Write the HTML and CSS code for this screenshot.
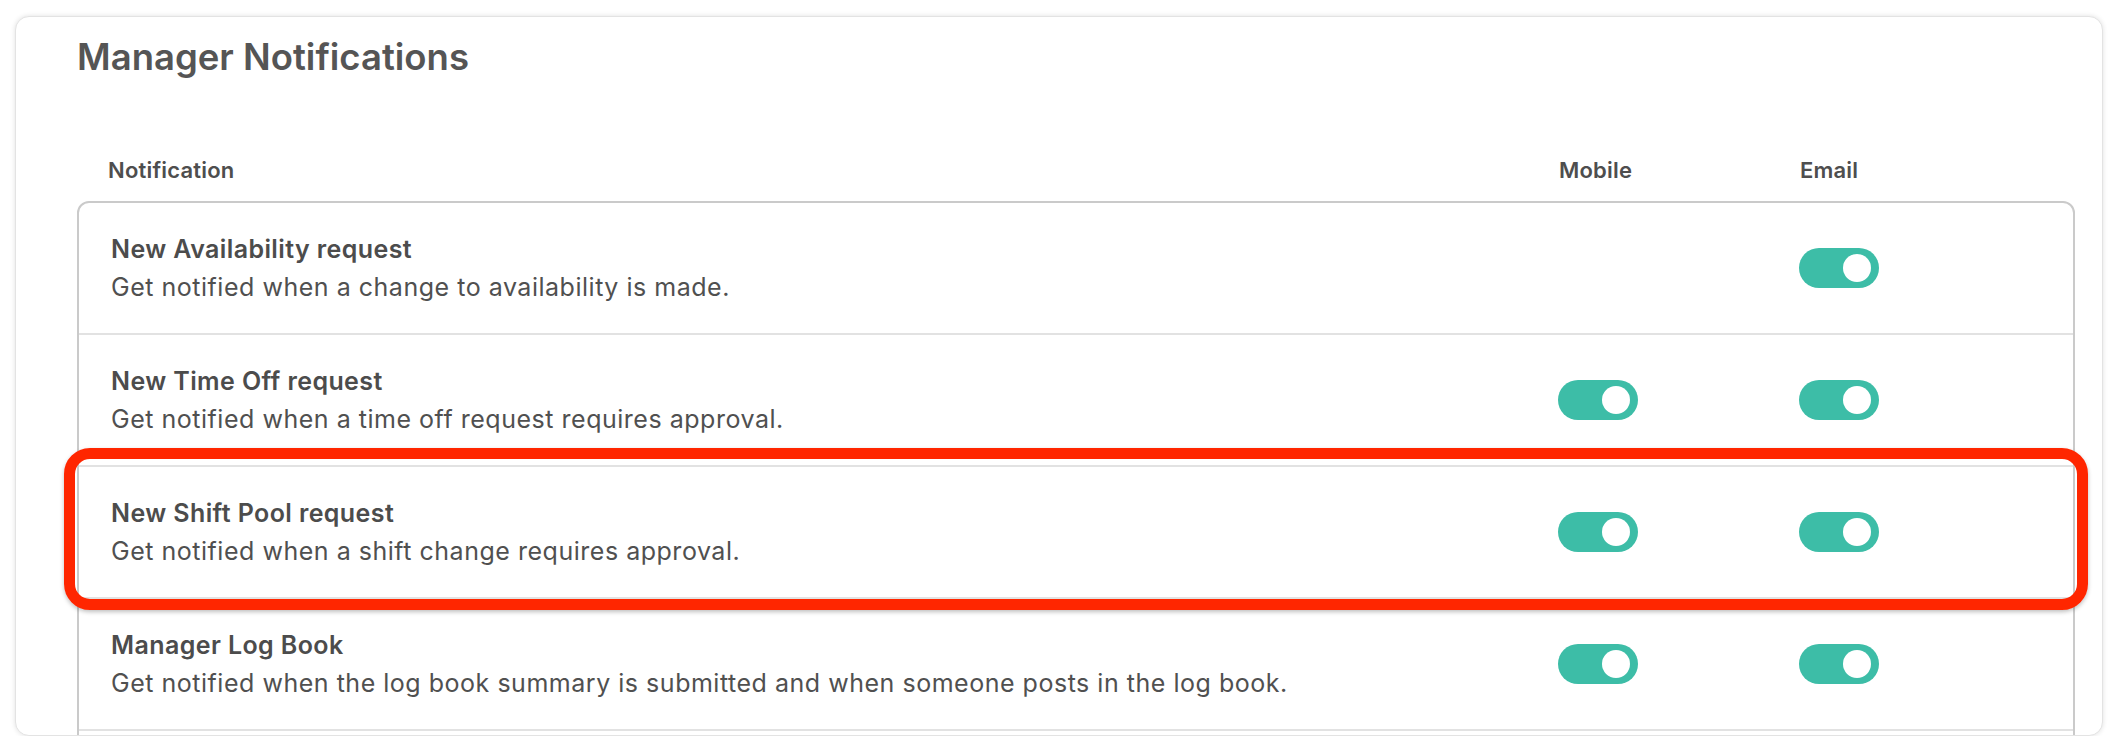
FILE: index.html
```html
<!DOCTYPE html>
<html lang="en">
<head>
  <meta charset="UTF-8">
  <title>Manager Notifications</title>
  <link rel="stylesheet" href="styles.css">
</head>
<body>
  <div class="card">
    <h1>Manager Notifications</h1>

    <div class="cols head">
      <div class="name">Notification</div>
      <div>Mobile</div>
      <div>Email</div>
    </div>

    <div class="table">
      <div class="cols row">
        <div class="name">
          <strong>New Availability request</strong>
          <span>Get notified when a change to availability is made.</span>
        </div>
        <div></div>
        <div><span class="toggle on"></span></div>
      </div>

      <div class="cols row">
        <div class="name">
          <strong>New Time Off request</strong>
          <span>Get notified when a time off request requires approval.</span>
        </div>
        <div><span class="toggle on"></span></div>
        <div><span class="toggle on"></span></div>
      </div>

      <div class="cols row marked">
        <div class="name">
          <strong>New Shift Pool request</strong>
          <span>Get notified when a shift change requires approval.</span>
        </div>
        <div><span class="toggle on"></span></div>
        <div><span class="toggle on"></span></div>
        <div class="mark"></div>
      </div>

      <div class="cols row">
        <div class="name">
          <strong>Manager Log Book</strong>
          <span>Get notified when the log book summary is submitted and when someone posts in the log book.</span>
        </div>
        <div><span class="toggle on"></span></div>
        <div><span class="toggle on"></span></div>
      </div>
    </div>
  </div>
</body>
</html>
```

FILE: styles.css
```css
body {
  margin: 0;
  padding: 16px 17px 0 15px;
  background: #fff;
  font-family: Inter, Lato, "Liberation Sans", sans-serif;
  color: #505050;
}
.card {
  box-sizing: border-box;
  height: 720px;
  overflow: hidden;
  border: 1px solid #e3e3e3;
  border-radius: 14px;
  box-shadow: 0 0 5px rgba(0, 0, 0, 0.12);
  padding: 0 27px 0 61px;
  background: #fff;
}
h1 {
  margin: 18px 0 0 0;
  font-size: 36.5px;
  line-height: 44px;
  font-weight: 600;
  color: #555;
}
.cols {
  display: grid;
  grid-template-columns: 1fr 241px 274px;
  align-items: center;
}
.head {
  margin: 76px 1px 16px 1px;
  font-size: 22px;
  line-height: 30px;
  letter-spacing: 0.2px;
  font-weight: 600;
  color: #4e4e4e;
}
.head .name {
  padding-left: 30px;
}
.table {
  height: 600px;
  border: 2px solid #cacaca;
  border-radius: 12px;
}
.row {
  position: relative;
  height: 130px;
  border-bottom: 2px solid #e2e2e2;
}
.row .name {
  padding-left: 32px;
  font-size: 25px;
  line-height: 38px;
  letter-spacing: 0.52px;
}
.row strong {
  display: block;
  font-weight: 600;
  letter-spacing: 0.4px;
  color: #4c4c4c;
}
.row span {
  display: block;
}
.toggle {
  position: relative;
  display: block;
  width: 80px;
  height: 40px;
  border-radius: 20px;
  background: #3dbda7;
}
.toggle.on::after {
  content: "";
  position: absolute;
  top: 6px;
  right: 8px;
  width: 28px;
  height: 28px;
  border-radius: 50%;
  background: #fff;
}
.mark {
  position: absolute;
  top: -19px;
  bottom: -13px;
  left: -15px;
  right: -15px;
  border: 11px solid #ff2600;
  border-radius: 26px;
  box-shadow: 0 2px 4px rgba(0, 0, 0, 0.25);
}
```
